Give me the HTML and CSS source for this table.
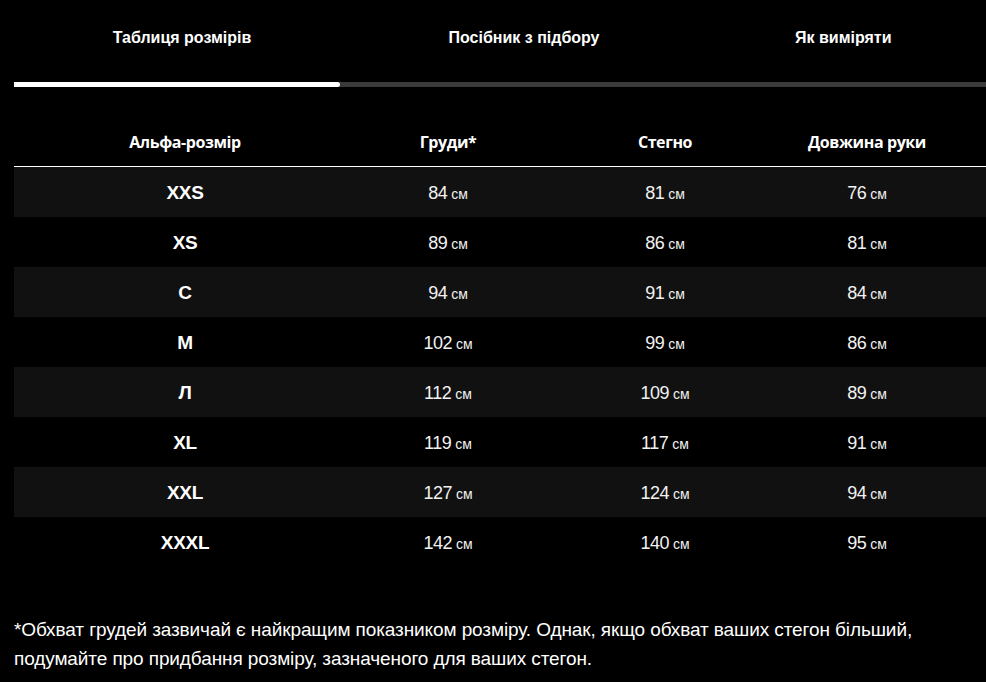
FILE: index.html
```html
<!DOCTYPE html>
<html lang="uk">
<head>
<meta charset="utf-8">
<title>Таблиця розмірів</title>
<link rel="stylesheet" href="styles.css">
</head>
<body>
<nav class="tabs">
  <div class="tab tab-1">Таблиця розмірів</div>
  <div class="tab tab-2">Посібник з підбору</div>
  <div class="tab tab-3">Як виміряти</div>
</nav>
<div class="track"><div class="track-fill"></div></div>

<div class="table">
  <div class="row head">
    <div class="cell">Альфа-розмір</div>
    <div class="cell">Груди*</div>
    <div class="cell">Стегно</div>
    <div class="cell">Довжина руки</div>
  </div>
  <div class="row odd">
    <div class="cell size">XXS</div>
    <div class="cell">84<span class="u">см</span></div>
    <div class="cell">81<span class="u">см</span></div>
    <div class="cell">76<span class="u">см</span></div>
  </div>
  <div class="row">
    <div class="cell size">XS</div>
    <div class="cell">89<span class="u">см</span></div>
    <div class="cell">86<span class="u">см</span></div>
    <div class="cell">81<span class="u">см</span></div>
  </div>
  <div class="row odd">
    <div class="cell size">С</div>
    <div class="cell">94<span class="u">см</span></div>
    <div class="cell">91<span class="u">см</span></div>
    <div class="cell">84<span class="u">см</span></div>
  </div>
  <div class="row">
    <div class="cell size">М</div>
    <div class="cell">102<span class="u">см</span></div>
    <div class="cell">99<span class="u">см</span></div>
    <div class="cell">86<span class="u">см</span></div>
  </div>
  <div class="row odd">
    <div class="cell size">Л</div>
    <div class="cell">112<span class="u">см</span></div>
    <div class="cell">109<span class="u">см</span></div>
    <div class="cell">89<span class="u">см</span></div>
  </div>
  <div class="row">
    <div class="cell size">XL</div>
    <div class="cell">119<span class="u">см</span></div>
    <div class="cell">117<span class="u">см</span></div>
    <div class="cell">91<span class="u">см</span></div>
  </div>
  <div class="row odd">
    <div class="cell size">XXL</div>
    <div class="cell">127<span class="u">см</span></div>
    <div class="cell">124<span class="u">см</span></div>
    <div class="cell">94<span class="u">см</span></div>
  </div>
  <div class="row">
    <div class="cell size">XXXL</div>
    <div class="cell">142<span class="u">см</span></div>
    <div class="cell">140<span class="u">см</span></div>
    <div class="cell">95<span class="u">см</span></div>
  </div>
</div>

<p class="note">*Обхват грудей зазвичай є найкращим показником розміру. Однак, якщо обхват ваших стегон більший, подумайте про придбання розміру, зазначеного для ваших стегон.</p>
</body>
</html>
```

FILE: styles.css
```css
html, body {
  margin: 0;
  padding: 0;
  background: #000;
  color: #fff;
}
body {
  width: 986px;
  height: 682px;
  overflow: hidden;
  font-family: "Liberation Sans", Arial, sans-serif;
}
.tabs {
  display: grid;
  grid-template-columns: 364px 320px 302px;
  height: 76px;
  align-items: center;
  font-family: "Liberation Sans Narrow", "Liberation Sans", sans-serif;
  font-weight: 700;
  font-size: 16px;
  letter-spacing: 0;
}
.tab {
  text-align: center;
}
.tab-3 {
  text-align: left;
  padding-left: 111px;
}
.track {
  margin: 6px 0 0 14px;
  height: 5px;
  background: #3a3a3a;
}
.track-fill {
  width: 326px;
  height: 5px;
  background: #fff;
  border-radius: 0 3px 3px 0;
}
.table {
  margin-top: 30px;
  margin-left: 14px;
}
.row {
  display: grid;
  grid-template-columns: 342px 184px 250px 154px 1fr;
  height: 50px;
  align-items: center;
}
.row.odd {
  background: #111;
}
.cell {
  text-align: center;
  font-size: 18px;
  letter-spacing: -0.5px;
  color: #f2f2f2;
  padding-top: 2px;
}
.head {
  height: 49px;
  border-bottom: 1px solid #fff;
  align-items: end;
}
.head .cell {
  font-family: "Open Sans", sans-serif;
  font-weight: 700;
  font-size: 16px;
  letter-spacing: -0.4px;
  padding: 0 0 13px;
  color: #fff;
}
.size {
  font-weight: 700;
  font-size: 19px;
  letter-spacing: -0.3px;
  color: #fff;
}
.u {
  font-size: 14px;
  margin-left: 4px;
  letter-spacing: 0;
}
.note {
  margin: 48px 0 0 14px;
  width: 940px;
  font-family: "Liberation Sans Narrow", "Liberation Sans", sans-serif;
  font-size: 19px;
  line-height: 29px;
  letter-spacing: -0.1px;
}
```
